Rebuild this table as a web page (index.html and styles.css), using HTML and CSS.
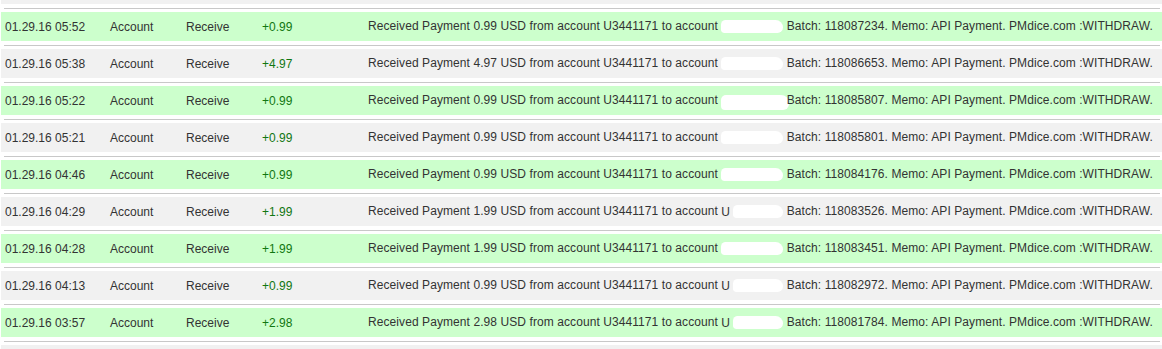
FILE: index.html
```html
<!DOCTYPE html>
<html>
<head>
<meta charset="utf-8">
<link rel="stylesheet" href="styles.css">
</head>
<body>
<div class="list">
  <div class="row gray stub"></div>
  <div class="sep"></div>

  <div class="row green">
    <span>01.29.16 05:52</span><span>Account</span><span>Receive</span><span class="amt">+0.99</span>
    <span class="desc">Received Payment 0.99 USD from account U3441171 to account <span class="acct"><i class="blob"></i></span> Batch: 118087234. Memo: API Payment. PMdice.com :WITHDRAW.</span>
  </div>
  <div class="sep"></div>

  <div class="row gray">
    <span>01.29.16 05:38</span><span>Account</span><span>Receive</span><span class="amt">+4.97</span>
    <span class="desc">Received Payment 4.97 USD from account U3441171 to account <span class="acct"><i class="blob"></i></span> Batch: 118086653. Memo: API Payment. PMdice.com :WITHDRAW.</span>
  </div>
  <div class="sep"></div>

  <div class="row green">
    <span>01.29.16 05:22</span><span>Account</span><span>Receive</span><span class="amt">+0.99</span>
    <span class="desc">Received Payment 0.99 USD from account U3441171 to account <span class="acct"><i class="blob wide"></i></span> Batch: 118085807. Memo: API Payment. PMdice.com :WITHDRAW.</span>
  </div>
  <div class="sep"></div>

  <div class="row gray">
    <span>01.29.16 05:21</span><span>Account</span><span>Receive</span><span class="amt">+0.99</span>
    <span class="desc">Received Payment 0.99 USD from account U3441171 to account <span class="acct"><i class="blob"></i></span> Batch: 118085801. Memo: API Payment. PMdice.com :WITHDRAW.</span>
  </div>
  <div class="sep"></div>

  <div class="row green">
    <span>01.29.16 04:46</span><span>Account</span><span>Receive</span><span class="amt">+0.99</span>
    <span class="desc">Received Payment 0.99 USD from account U3441171 to account <span class="acct"><i class="blob"></i></span> Batch: 118084176. Memo: API Payment. PMdice.com :WITHDRAW.</span>
  </div>
  <div class="sep"></div>

  <div class="row gray">
    <span>01.29.16 04:29</span><span>Account</span><span>Receive</span><span class="amt">+1.99</span>
    <span class="desc">Received Payment 1.99 USD from account U3441171 to account <span class="acct">U<i class="blob short"></i></span> Batch: 118083526. Memo: API Payment. PMdice.com :WITHDRAW.</span>
  </div>
  <div class="sep"></div>

  <div class="row green">
    <span>01.29.16 04:28</span><span>Account</span><span>Receive</span><span class="amt">+1.99</span>
    <span class="desc">Received Payment 1.99 USD from account U3441171 to account <span class="acct"><i class="blob"></i></span> Batch: 118083451. Memo: API Payment. PMdice.com :WITHDRAW.</span>
  </div>
  <div class="sep"></div>

  <div class="row gray">
    <span>01.29.16 04:13</span><span>Account</span><span>Receive</span><span class="amt">+0.99</span>
    <span class="desc">Received Payment 0.99 USD from account U3441171 to account <span class="acct">U<i class="blob short"></i></span> Batch: 118082972. Memo: API Payment. PMdice.com :WITHDRAW.</span>
  </div>
  <div class="sep"></div>

  <div class="row green">
    <span>01.29.16 03:57</span><span>Account</span><span>Receive</span><span class="amt">+2.98</span>
    <span class="desc">Received Payment 2.98 USD from account U3441171 to account <span class="acct">U<i class="blob short"></i></span> Batch: 118081784. Memo: API Payment. PMdice.com :WITHDRAW.</span>
  </div>
  <div class="sep"></div>

  <div class="row gray stub"></div>
</div>
</body>
</html>
```

FILE: styles.css
```css
html, body {
  margin: 0;
  padding: 0;
  background: #ffffff;
  overflow: hidden;
}

.list {
  padding-left: 1px;
  font-family: "Liberation Sans", Arial, sans-serif;
  font-size: 12px;
  color: #333333;
}

.row {
  height: 29px;
  display: grid;
  grid-template-columns: 105px 76px 76px 106px 1fr;
  align-items: center;
  padding-left: 4px;
  white-space: nowrap;
  margin-bottom: 4px;
}

.row.stub {
  height: 4px;
}

.green {
  background: #ccffcc;
}

.gray {
  background: #f1f1f1;
}

.sep {
  height: 1px;
  background: #c8c8c8;
  margin: 0 2px 3px 3px;
}

.amt {
  color: #117711;
}

.desc {
  display: block;
  letter-spacing: 0.08px;
}

.acct {
  display: inline-flex;
  align-items: center;
  vertical-align: middle;
  width: 62px;
  height: 14px;
}

.blob {
  display: block;
  flex: 1;
  height: 13px;
  background: #ffffff;
  border-radius: 5px 8px 6px 4px;
}

.blob.wide {
  height: 15px;
  margin-right: -6px;
  margin-top: 3px;
}

.blob.short {
  margin-left: 3px;
}
```
